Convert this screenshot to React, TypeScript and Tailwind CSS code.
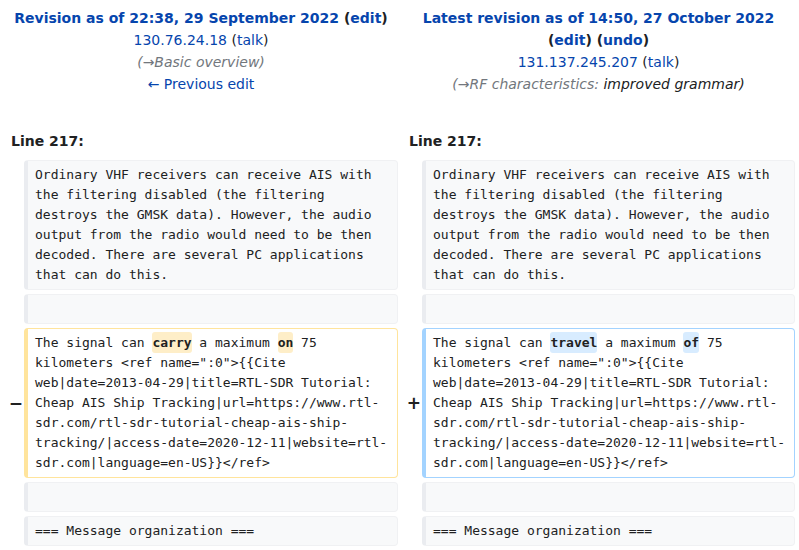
const sans = "font-['DejaVu_Sans',sans-serif]";
const mono = "font-['DejaVu_Sans_Mono',monospace]";

const context1 =
  "Ordinary VHF receivers can receive AIS with the filtering disabled (the filtering destroys the GMSK data). However, the audio output from the radio would need to be then decoded. There are several PC applications that can do this.";
const tail =
  ' 75 kilometers <ref name=":0">{{Cite web|date=2013-04-29|title=RTL-SDR Tutorial: Cheap AIS Ship Tracking|url=https://www.rtl-sdr.com/rtl-sdr-tutorial-cheap-ais-ship-tracking/|access-date=2020-12-11|website=rtl-sdr.com|language=en-US}}</ref>';

function Block({ kind, children }: { kind: "ctx" | "del" | "add"; children?: React.ReactNode }) {
  const tone =
    kind === "ctx"
      ? "bg-[#f8f9fa] border-[#f0f1f3] border-l-[#eaecf0]"
      : kind === "del"
        ? "bg-white border-[#ffe49c]"
        : "bg-white border-[#a3d3ff]";
  return (
    <div
      className={`${mono} ${tone} min-h-[30px] rounded-[4px] border border-l-4 py-[4px] pl-[7px] pr-[6px] text-[13px] leading-[20px] text-[#202122] whitespace-pre-wrap break-words`}
    >
      {children}
    </div>
  );
}

function Marker({ sign }: { sign?: string }) {
  return (
    <div className={`${sans} flex items-center justify-end pr-[1px] text-[17px] font-bold text-[#202122]`}>
      {sign}
    </div>
  );
}

function Change({ text, tone }: { text: string; tone: "del" | "add" }) {
  const bg = tone === "del" ? "bg-[#feeec8]" : "bg-[#d8ecff]";
  return <span className={`${bg} rounded-[3px] py-[3px] font-bold`}>{text}</span>;
}

export default function App() {
  const link = "text-[#0645ad]";
  return (
    <div className={`${sans} h-[550px] w-[799px] overflow-hidden bg-white text-[14px] leading-[22px] text-[#202122]`}>
      {/* revision headers */}
      <div className="grid grid-cols-[24px_374px_24px_373px] pt-[7px]">
        <div className="col-span-2 pl-[4px] text-center">
          <div className="font-bold">
            <span className={link}>Revision as of 22:38, 29 September 2022</span> (
            <span className={link}>edit</span>)
          </div>
          <div>
            <span className={link}>130.76.24.18</span> (<span className={link}>talk</span>)
          </div>
          <div className="italic text-[#72777d]">(→Basic overview)</div>
          <div className={link}>← Previous edit</div>
        </div>
        <div className="col-span-2 pl-[4px] text-center">
          <div className="font-bold">
            <span className={link}>Latest revision as of 14:50, 27 October 2022</span>
          </div>
          <div className="font-bold">
            (<span className={link}>edit</span>) (<span className={link}>undo</span>)
          </div>
          <div>
            <span className={link}>131.137.245.207</span> (<span className={link}>talk</span>)
          </div>
          <div className="italic text-[#72777d]">
            (→RF characteristics: <span className="text-[#202122]">improved grammar)</span>
          </div>
        </div>
      </div>

      {/* diff table */}
      <div className="mt-[35px] grid grid-cols-[24px_374px_24px_373px] gap-y-[4px]">
        <div className="col-span-2 mb-[4px] pl-[11px] font-bold">Line 217:</div>
        <div className="col-span-2 mb-[4px] pl-[11px] font-bold">Line 217:</div>

        <Marker />
        <Block kind="ctx">{context1}</Block>
        <Marker />
        <Block kind="ctx">{context1}</Block>

        <Marker />
        <Block kind="ctx" />
        <Marker />
        <Block kind="ctx" />

        <Marker sign="−" />
        <Block kind="del">
          The signal can <Change text="carry" tone="del" /> a maximum <Change text="on" tone="del" />
          {tail}
        </Block>
        <Marker sign="+" />
        <Block kind="add">
          The signal can <Change text="travel" tone="add" /> a maximum <Change text="of" tone="add" />
          {tail}
        </Block>

        <Marker />
        <Block kind="ctx" />
        <Marker />
        <Block kind="ctx" />

        <Marker />
        <Block kind="ctx">=== Message organization ===</Block>
        <Marker />
        <Block kind="ctx">=== Message organization ===</Block>
      </div>
    </div>
  );
}
